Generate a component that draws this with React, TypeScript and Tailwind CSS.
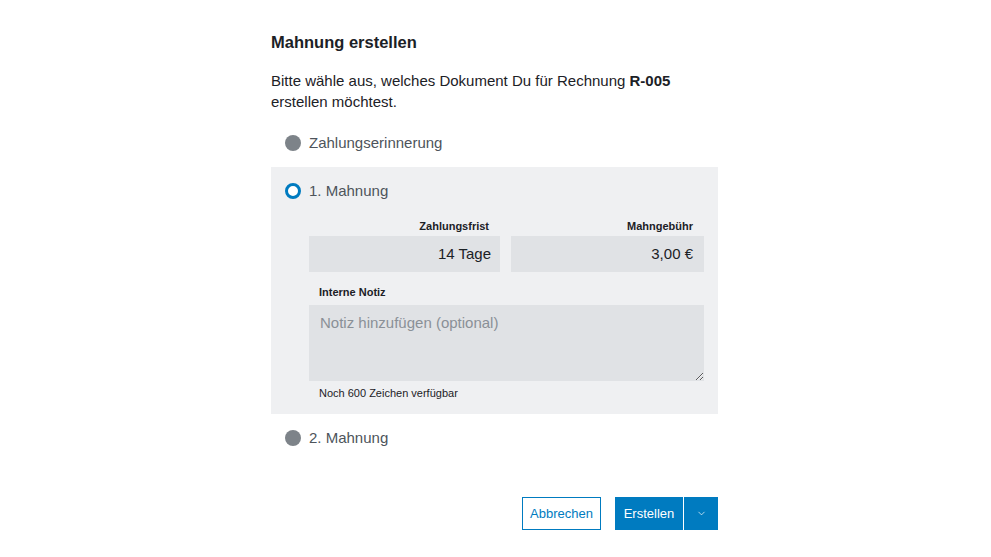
import { ChevronDown } from 'lucide-react';

function Radio({ checked }: { checked?: boolean }) {
  return checked ? (
    <span className="box-border w-4 h-4 rounded-full border-[3px] border-[#007bc0] bg-white shrink-0" />
  ) : (
    <span className="w-4 h-4 rounded-full bg-[#7d8389] shrink-0" />
  );
}

export default function App() {
  return (
    <div className="w-full h-[557px] bg-white text-[#1c2126]" style={{ fontFamily: '"Liberation Sans", Arial, sans-serif' }}>
      <div className="ml-[271px] w-[447px] pt-[30px] flex flex-col">
        <h2 className="text-[16.5px] leading-[24px] font-bold">Mahnung erstellen</h2>
        <p className="mt-[16px] text-[15px] leading-[21px]">
          Bitte wähle aus, welches Dokument Du für Rechnung <b>R-005</b> erstellen möchtest.
        </p>

        <label className="mt-[19px] ml-[14px] flex items-center gap-[8px] h-[24px] text-[15px] text-[#4d545b]">
          <Radio />
          Zahlungserinnerung
        </label>

        {/* ausgewählte Option mit Feldern */}
        <div className="mt-[12px] bg-[#eff0f2] pt-[12px] pb-[13px] pr-[14px]">
          <label className="ml-[14px] flex items-center gap-[8px] h-[24px] text-[15px] text-[#4d545b]">
            <Radio checked />
            1. Mahnung
          </label>

          <div className="ml-[38px] mt-[15px] grid grid-cols-[191px_1fr] gap-x-[11px]">
            <div className="flex flex-col">
              <span className="text-[11px] leading-[16px] font-bold text-right pr-[11px]">Zahlungsfrist</span>
              <div className="mt-[2px] h-[36px] bg-[#e0e2e5] flex items-center justify-end pr-[9px] text-[15px]">14 Tage</div>
            </div>
            <div className="flex flex-col">
              <span className="text-[11px] leading-[16px] font-bold text-right pr-[11px]">Mahngebühr</span>
              <div className="mt-[2px] h-[36px] bg-[#e0e2e5] flex items-center justify-end pr-[11px] text-[15px]">3,00 €</div>
            </div>
          </div>

          <div className="ml-[38px] mt-[12px] flex flex-col">
            <span className="pl-[10px] text-[11px] leading-[16px] font-bold">Interne Notiz</span>
            <textarea
              className="mt-[5px] h-[76px] bg-[#e0e2e5] px-[11px] pt-[7px] text-[15px] leading-[22px] outline-none placeholder:text-[#8a9097]"
              placeholder="Notiz hinzufügen (optional)"
            />
            <span className="mt-[4px] pl-[10px] text-[11px] leading-[16px]">Noch 600 Zeichen verfügbar</span>
          </div>
        </div>

        <label className="mt-[12px] ml-[14px] flex items-center gap-[8px] h-[24px] text-[15px] text-[#4d545b]">
          <Radio />
          2. Mahnung
        </label>

        <div className="mt-[47px] flex justify-end gap-[14px]">
          <button className="h-[33px] w-[79px] border border-[#007bc0] text-[#007bc0] text-[13px] bg-white">Abbrechen</button>
          <div className="flex h-[33px]">
            <button className="w-[68px] bg-[#007bc0] text-white text-[13px]">Erstellen</button>
            <button className="w-[35px] bg-[#007bc0] text-white border-l border-white flex items-center justify-center">
              <ChevronDown size={11} strokeWidth={1.5} />
            </button>
          </div>
        </div>
      </div>
    </div>
  );
}
